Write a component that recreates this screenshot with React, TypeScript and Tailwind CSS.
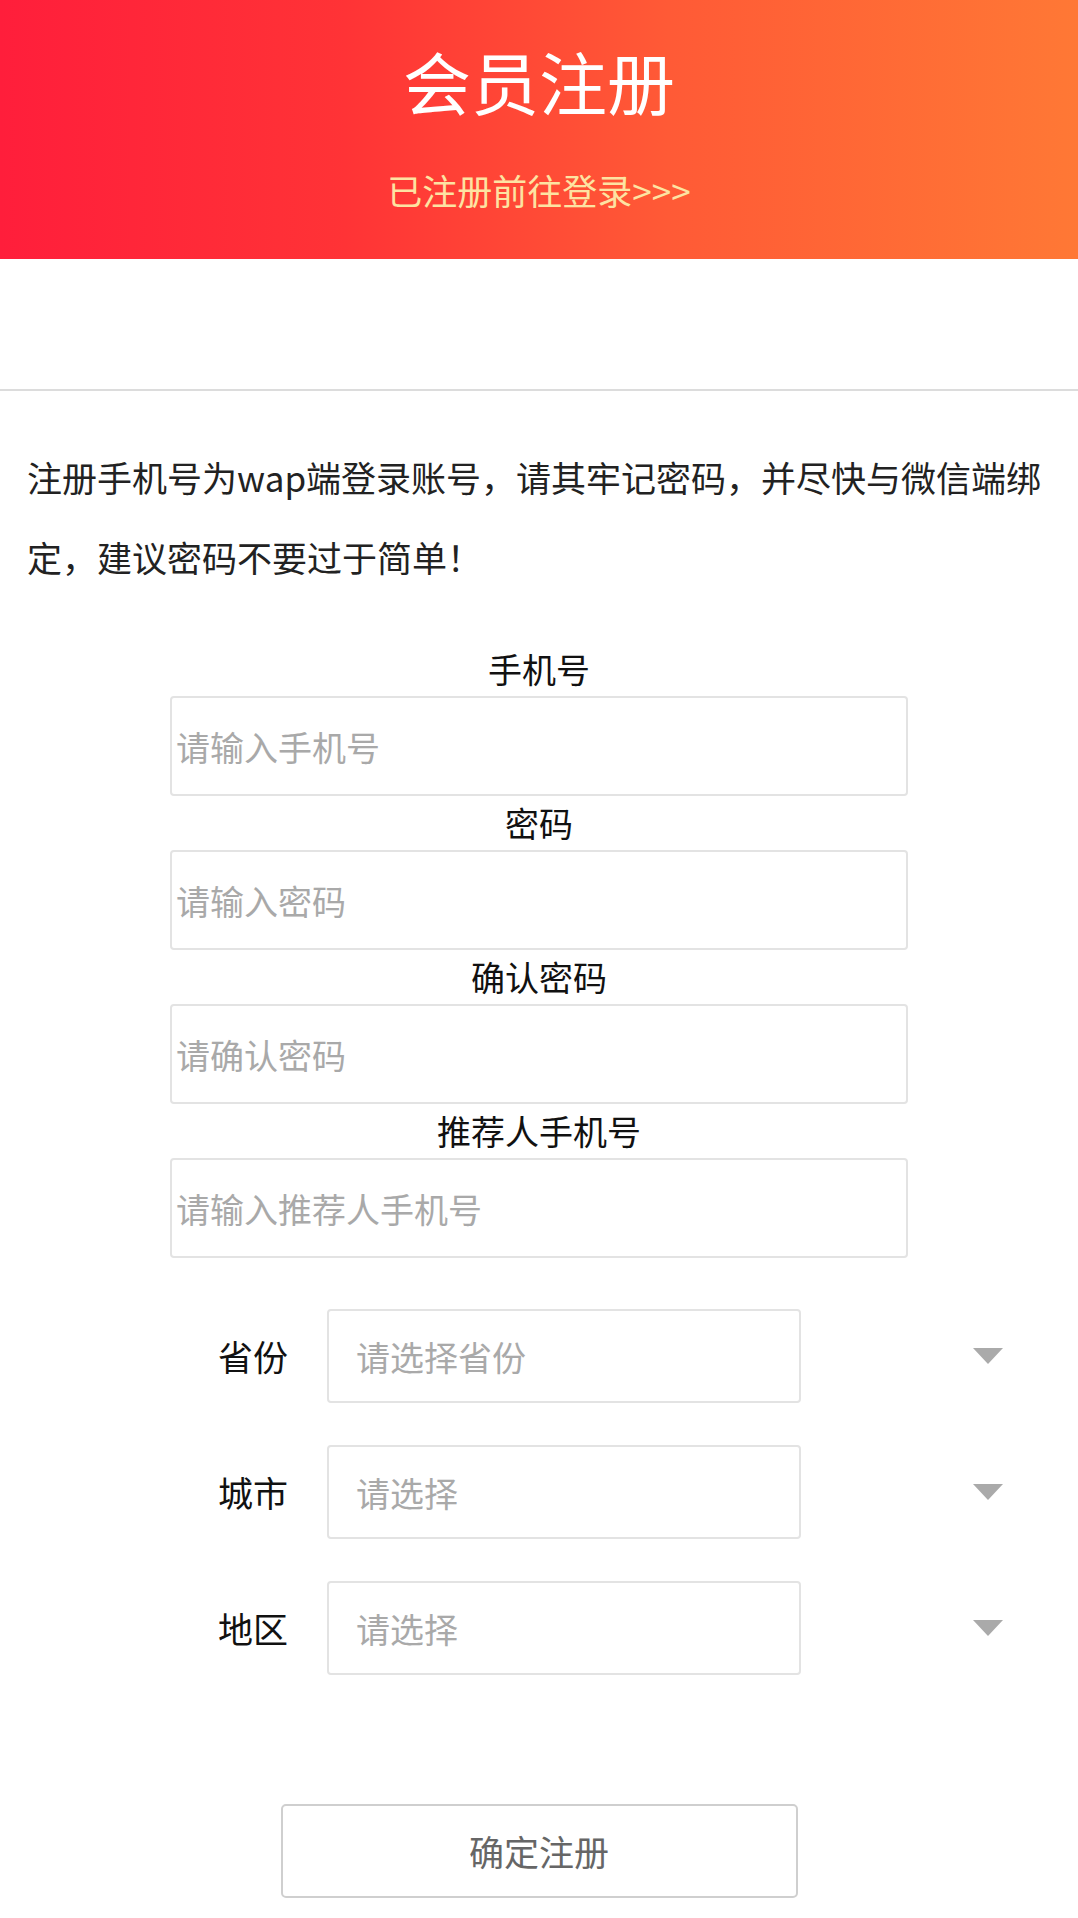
import React from "react";

const fields = [
  { label: "手机号", placeholder: "请输入手机号" },
  { label: "密码", placeholder: "请输入密码" },
  { label: "确认密码", placeholder: "请确认密码" },
  { label: "推荐人手机号", placeholder: "请输入推荐人手机号" },
];

const selects = [
  { label: "省份", placeholder: "请选择省份" },
  { label: "城市", placeholder: "请选择" },
  { label: "地区", placeholder: "请选择" },
];

const App: React.FC = () => {
  return (
    <div className="min-h-[1918px] bg-white font-['Noto_Sans_CJK_SC',sans-serif]">
      <header className="h-[259px] flex flex-col items-center bg-[linear-gradient(90deg,#ff1e3b_0%,#ff3336_32%,#ff5a36_62%,#ff7835_100%)]">
        <h1 className="mt-[35px] text-[68px] leading-[92px] font-normal text-white">
          会员注册
        </h1>
        <p className="mt-[40px] text-[35px] leading-[46px] text-[#fde3a2]">
          已注册前往登录&gt;&gt;&gt;
        </p>
      </header>

      <div className="h-[130px]" />
      <div className="h-[2px] bg-[#dcdcdc]" />

      <p className="pt-[46px] pl-[27px] pr-[18px] text-[35px] leading-[80px] text-[#222]">
        注册手机号为wap端登录账号，请其牢记密码，并尽快与微信端绑定，建议密码不要过于简单！
      </p>

      <form className="mt-[45px] flex flex-col items-center">
        {fields.map((f) => (
          <div key={f.label} className="flex flex-col items-center">
            <label className="h-[54px] text-[34px] leading-[54px] text-[#111]">
              {f.label}
            </label>
            <input
              type="text"
              placeholder={f.placeholder}
              className="w-[738px] h-[100px] px-[4px] border-2 border-[#e3e3e3] rounded-[4px] text-[34px] text-[#333] placeholder:text-[#a9a9a9] outline-none"
            />
          </div>
        ))}

        <div className="mt-[51px] w-full flex flex-col gap-[42px]">
          {selects.map((s) => (
            <div key={s.label} className="flex items-center pl-[218px] pr-[75px]">
              <span className="w-[109px] text-[35px] text-[#111]">{s.label}</span>
              <div className="w-[474px] h-[94px] flex items-center pl-[27px] border-2 border-[#e3e3e3] rounded-[4px] text-[34px] text-[#a9a9a9]">
                {s.placeholder}
              </div>
              <svg className="ml-auto" width="30" height="16" viewBox="0 0 30 16">
                <path d="M0 0h30L15 16z" fill="#aaaaaa" />
              </svg>
            </div>
          ))}
        </div>

        <button
          type="button"
          className="mt-[129px] w-[517px] h-[94px] border-2 border-[#cfcfcf] rounded-[5px] bg-white text-[35px] text-[#666]"
        >
          确定注册
        </button>
      </form>
    </div>
  );
};

export default App;
